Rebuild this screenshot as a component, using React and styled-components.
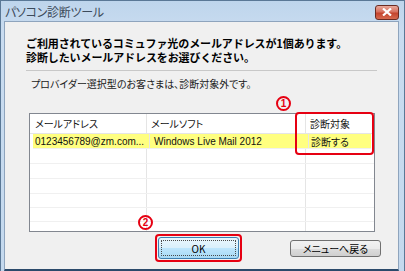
import React from "react";
import styled, { createGlobalStyle } from "styled-components";

const Global = createGlobalStyle`
  html, body { margin: 0; padding: 0; }
  body {
    width: 405px; height: 271px; overflow: hidden;
    font-family: "Noto Sans CJK JP", "Noto Sans", sans-serif;
    font-feature-settings: "palt";
  }
`;

const Window = styled.div`
  width: 405px;
  height: 271px;
  box-sizing: border-box;
  background: linear-gradient(#bed5ec, #c9dcf0 30px, #c4d9ee);
  border-left: 1px solid #5a7896;
  border-top: 1px solid #5a7896;
  border-right: 1px solid #5a7896;
  display: flex;
  flex-direction: column;
`;

const TitleBar = styled.div`
  height: 20px;
  display: flex;
  align-items: center;
  justify-content: space-between;
  padding: 0 5px 0 4px;
  flex: none;
`;

const Title = styled.span`
  font-size: 12px;
  color: #3c4a5a;
  letter-spacing: -0.3px;
`;

const CloseBtn = styled.div`
  width: 24px;
  height: 15px;
  margin-top: 2px;
  box-sizing: border-box;
  border: 1px solid #6b2b22;
  border-radius: 3px;
  background: linear-gradient(#e9a99c, #d7705e 45%, #c4442d 55%, #d66a4f);
  display: flex;
  align-items: center;
  justify-content: center;
`;

const Client = styled.div`
  flex: 1;
  margin: 0 5px 0 3px;
  background: #f0f0f0;
  border: 1px solid #8ea4bd;
  border-bottom: 2px solid #2b4a6b;
  padding: 14px 0 0 21px;
  display: flex;
  flex-direction: column;
  position: relative;
`;

const Heading = styled.div`
  font-size: 11px;
  font-weight: bold;
  color: #000;
  font-feature-settings: normal;
  letter-spacing: -0.1px;
  display: flex;
  flex-direction: column;
`;

const HeadLine = styled.div`
  height: 14px;
  line-height: 14px;
`;

const Separator = styled.div`
  height: 1px;
  width: 351px;
  background: #c8c8c8;
  margin-top: 6px;
`;

const Note = styled.div`
  font-size: 10px;
  color: #1a1a1a;
  line-height: 12px;
  margin: 7px 0 0 5px;
`;

const List = styled.div`
  margin: 23px 0 0 3px;
  width: 346px;
  height: 119px;
  box-sizing: border-box;
  border: 1px solid #828790;
  background: #fff;
  display: flex;
  flex-direction: column;
  overflow: hidden;
`;

const Row = styled.div`
  display: grid;
  grid-template-columns: 117px 159px 1fr;
  height: ${(p) => p.$h}px;
  flex: none;
  box-sizing: border-box;
  border-bottom: 1px solid ${(p) => (p.$header ? "#e5e5e5" : "#f0f0f0")};
  background: ${(p) => (p.$selected ? "#ffff80" : "transparent")};
  margin: 0 ${(p) => (p.$selected ? 3 : 0)}px 0 ${(p) => (p.$selected ? 3 : 0)}px;
`;

const Cell = styled.div`
  font-family: "Liberation Sans", "Noto Sans CJK JP", sans-serif;
  font-size: 10px;
  color: #111;
  white-space: nowrap;
  overflow: hidden;
  display: flex;
  align-items: center;
  padding-left: ${(p) => p.$pad}px;
  border-right: 1px solid ${(p) => (p.$last ? "transparent" : "#e5e5e5")};
`;

const Annot = styled.div`
  position: absolute;
  left: ${(p) => p.$x}px;
  top: ${(p) => p.$y}px;
  width: 15px;
  height: 15px;
  box-sizing: border-box;
  border: 2px solid #e60012;
  border-radius: 50%;
  display: flex;
  align-items: center;
  justify-content: center;
  font-family: "Liberation Sans", sans-serif;
  font-size: 10px;
  font-weight: bold;
  color: #e60012;
  line-height: 10px;
`;

const RedBox = styled.div`
  position: absolute;
  left: 290px;
  top: 90px;
  width: 79px;
  height: 43px;
  box-sizing: border-box;
  border: 2px solid #e60012;
  border-radius: 4px;
`;

const ButtonBar = styled.div`
  display: flex;
  align-items: center;
  margin: auto 0 7px 129px;
`;

const Focus = styled.div`
  border: 2px solid #e60012;
  border-radius: 4px;
  padding: 1px;
`;

const Button = styled.div`
  width: ${(p) => p.$w}px;
  height: ${(p) => p.$h}px;
  box-sizing: border-box;
  border: 1px solid ${(p) => (p.$default ? "#3c7fb1" : "#707070")};
  border-radius: 3px;
  background: ${(p) =>
    p.$default
      ? "linear-gradient(#eaf6fd, #d9f0fc 50%, #bee6fd 50%, #a7d9f5)"
      : "linear-gradient(#f2f2f2, #ebebeb 50%, #dddddd 50%, #cfcfcf)"};
  font-size: 10px;
  color: #000;
  display: flex;
  align-items: center;
  justify-content: center;
  margin-left: ${(p) => p.$ml || 0}px;
  position: relative;
  &::after {
    content: "";
    display: ${(p) => (p.$default ? "block" : "none")};
    position: absolute;
    inset: 2px;
    border: 1px dotted #4a4a4a;
    border-radius: 1px;
  }
`;

const rows = [
  { h: 20, header: true, c: ["メールアドレス", "メールソフト", "診断対象"] },
  { h: 15, selected: true, c: ["0123456789@zm.com...", "Windows Live Mail 2012", "診断する"] },
  { h: 15, c: ["", "", ""] },
  { h: 15, c: ["", "", ""] },
  { h: 15, c: ["", "", ""] },
  { h: 14, c: ["", "", ""] },
  { h: 14, c: ["", "", ""] },
  { h: 14, c: ["", "", ""] },
];

export default function App() {
  return (
    <>
      <Global />
      <Window>
        <TitleBar>
          <Title>パソコン診断ツール</Title>
          <CloseBtn>
            <svg width="10" height="8" viewBox="0 0 10 8">
              <path d="M1 0.5 L9 7.5 M9 0.5 L1 7.5" stroke="#fff" strokeWidth="2.2" />
            </svg>
          </CloseBtn>
        </TitleBar>
        <Client>
          <Heading>
            <HeadLine>ご利用されているコミュファ光のメールアドレスが1個あります。</HeadLine>
            <HeadLine>診断したいメールアドレスをお選びください。</HeadLine>
          </Heading>
          <Separator />
          <Note>プロバイダー選択型のお客さまは、診断対象外です。</Note>
          <List>
            {rows.map((r, i) => (
              <Row key={i} $h={r.h} $header={r.header} $selected={r.selected}>
                <Cell $pad={r.selected ? 2 : 5}>{r.c[0]}</Cell>
                <Cell $pad={4}>{r.c[1]}</Cell>
                <Cell $pad={r.selected ? 2 : 4} $last>{r.c[2]}</Cell>
              </Row>
            ))}
          </List>
          <ButtonBar>
            <Focus>
              <Button $default $w={81} $h={22}>OK</Button>
            </Focus>
            <Button $w={91} $h={17} $ml={48}>メニューへ戻る</Button>
          </ButtonBar>
          <RedBox />
          <Annot $x={271} $y={74}>1</Annot>
          <Annot $x={133} $y={193}>2</Annot>
        </Client>
      </Window>
    </>
  );
}
